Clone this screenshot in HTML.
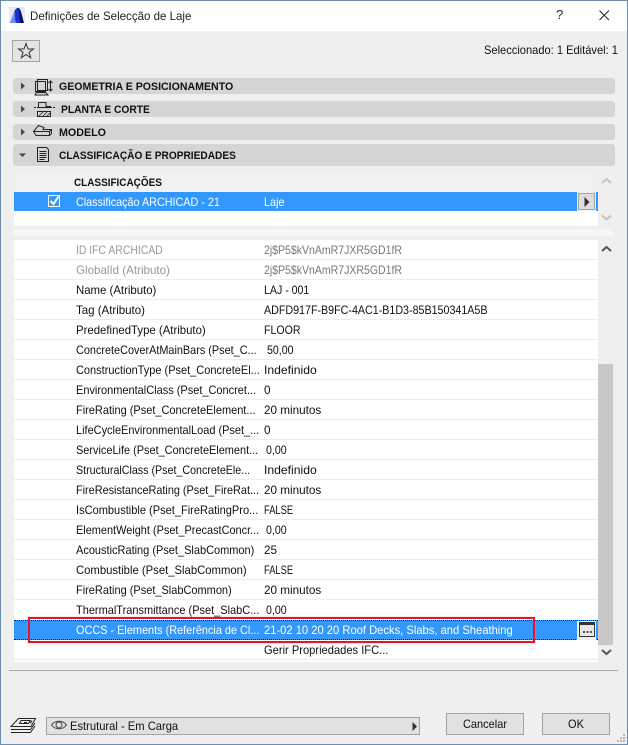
<!DOCTYPE html>
<html><head><meta charset="utf-8"><style>
html,body{margin:0;padding:0}
body{width:628px;height:745px;overflow:hidden;position:relative;background:#efefef;font-family:"Liberation Sans",sans-serif;font-size:11.7px;color:#101010}
div,span{position:absolute}
.t{white-space:nowrap;line-height:18px;height:18px;margin-top:1px;transform-origin:0 50%}
.b{font-weight:bold;font-size:11.4px;color:#111}
.bar{left:13px;width:602px;background:#d5d5d5;border-radius:3px}
.ln{left:14px;width:584px;height:1px;background:#ececec}
.g{color:#999}
.w{color:#fff}
.i{transform:scaleX(1.04)}
.n{transform:scaleX(.906)}
.f{transform:scaleX(.8)}
svg{position:absolute;overflow:visible}
</style></head><body>
<div style="left:0;top:0;width:628px;height:31px;background:#fff"></div>
<div style="left:0;top:0;width:628px;height:1px;background:#6d8dad"></div>
<div style="left:0;top:0;width:1px;height:745px;background:#6d8dad"></div>
<div style="left:627px;top:0;width:1px;height:745px;background:#6d8dad"></div>
<div style="left:0;top:744px;width:628px;height:1px;background:#6d8dad"></div>

<svg style="left:9px;top:7px" width="17" height="17"><rect width="16" height="16" fill="#e8e8f4"/><path d="M1 16 C4 10 5 1 9 1 C12 1 13 10 15 16Z" fill="#1c2fd0"/><path d="M9 1 C12 1 13 10 15 16H11 C11 9 10 4 9 1Z" fill="#0a1250"/><path d="M1 16 C3 11 4 7 6 4 C6 9 6 13 7 16Z" fill="#6d8cf0"/></svg>
<div class="t" style="left:30px;top:6px;font-size:12px;color:#222;transform:scaleX(.96)">Definições de Selecção de Laje</div>
<div class="t" style="left:556px;top:5px;font-size:13px;color:#222">?</div>
<svg style="left:599px;top:10px" width="11" height="11"><path d="M.5 .5L10 10M10 .5L.5 10" stroke="#222" stroke-width="1" fill="none"/></svg>

<div style="left:12px;top:40px;width:26px;height:20px;border:1px solid #a5a5a5;background:#e4e4e4"></div>
<svg style="left:17px;top:42px" width="18" height="17"><path d="M9 1.5L11 7H16.5L12 10.3L13.7 15.8L9 12.5L4.300 15.8L6 10.300L1.500 7H7Z" fill="none" stroke="#333" stroke-width="1"/></svg>
<div class="t" style="left:484px;top:41px;transform:scaleX(.95)">Seleccionado: 1 Editável: 1</div>

<div class="bar" style="top:78px;height:16px"></div>
<div class="bar" style="top:101px;height:16px"></div>
<div class="bar" style="top:124px;height:16px"></div>
<div class="bar" style="top:144px;height:22px"></div>
<svg style="left:0;top:0" width="70" height="170">
<path d="M21 82.500l4 3.500l-4 3.500zM21 105.500l4 3.500l-4 3.500zM21 128.500l4 3.500l-4 3.500z" fill="#444"/>
<path d="M19 153.500h7l-3.500 3.500z" fill="#444"/>
<g fill="none" stroke="#222" stroke-width="1">
<path d="M37.500 79.500h10v11h-10zM35.500 81.500h10v10h-10z"/><path d="M36.500 92.500h9l2.500 2.500h-13z"/><path d="M50.500 81v10M48.500 83l2-2l2 2M48.500 89l2 2l2-2"/>
<path d="M38.500 102.500h7.500v4h5M38.500 102.500v5M34 107.500h2M37 107.500h15M53 107.500h2"/><path d="M37.500 111.500h13v5h-13z"/><path d="M39 116l4-4M43 116l4-4M47 116l3-3" stroke-width=".8"/>
<path d="M33.500 131.500L38.500 125.500L44 127.500L43 129.500H51.500V133.500L49.500 135.500H36ZM33.500 131.500H49.500L51.500 129.500M49.500 131.500V135.500"/>
<path d="M37.500 147.500h9l2 2v12h-11zM39.500 151.500h7M39.500 153.500h7M39.500 155.500h7M39.500 157.500h7M39.500 159.500h5"/>
</g></svg>
<div class="t b" style="left:59px;top:77px;transform:scaleX(.93)">GEOMETRIA E POSICIONAMENTO</div>
<div class="t b" style="left:61px;top:100px;transform:scaleX(.9)">PLANTA E CORTE</div>
<div class="t b" style="left:59px;top:123px;transform:scaleX(.94)">MODELO</div>
<div class="t b" style="left:59px;top:146px;transform:scaleX(.89)">CLASSIFICAÇÃO E PROPRIEDADES</div>

<div style="left:14px;top:172px;width:584px;height:20px;background:#f1f1f1"></div>
<div class="t b" style="left:74px;top:173px;font-size:10.9px;transform:scaleX(.913)">CLASSIFICAÇÕES</div>
<div style="left:14px;top:192px;width:584px;height:19px;background:#3398fe"></div>
<div style="left:14px;top:211px;width:584px;height:15px;background:#fff"></div>
<div style="left:577px;top:192px;width:19px;height:19px;background:#efefef"></div>
<div style="left:578px;top:193px;width:15px;height:15px;background:#dcdcdc;border:1px solid #a8a8a8"></div>
<svg style="left:584px;top:197px" width="8" height="10"><path d="M0.500 0v10l5-5z" fill="#333"/></svg>
<div style="left:48px;top:195px;width:10px;height:10px;border:1px solid #fff;background:#3398fe"></div>
<svg style="left:49px;top:195px" width="12" height="12"><path d="M1.500 6l3 3l5-7.500" fill="none" stroke="#fff" stroke-width="2"/></svg>
<div class="t w" style="left:76px;top:193px;transform:scaleX(.923)">Classificação ARCHICAD - 21</div>
<div class="t w" style="left:264px;top:193px;transform:scaleX(.93)">Laje</div>
<svg style="left:601px;top:177px" width="11" height="52"><path d="M1 6l4.500-4l4.500 4" fill="none" stroke="#c4c4c4" stroke-width="2"/><path d="M1 38.500l4.500 4l4.500-4" fill="none" stroke="#c4c4c4" stroke-width="2"/></svg>

<div style="left:14px;top:229px;width:600px;height:7px;background:#f6f6f6"></div>

<div style="left:14px;top:240px;width:584px;height:422px;background:#fff"></div>
<div style="left:598px;top:364px;width:15px;height:281px;background:#c8c8c8"></div>
<svg style="left:601px;top:245px" width="11" height="414"><path d="M1 6l4.500-4l4.500 4" fill="none" stroke="#555" stroke-width="2"/><path d="M1 405l4.500 4l4.500-4" fill="none" stroke="#555" stroke-width="2"/></svg>

<div class="ln" style="top:259px"></div><div class="ln" style="top:279px"></div><div class="ln" style="top:299px"></div><div class="ln" style="top:319px"></div><div class="ln" style="top:339px"></div><div class="ln" style="top:359px"></div><div class="ln" style="top:379px"></div><div class="ln" style="top:399px"></div><div class="ln" style="top:419px"></div><div class="ln" style="top:439px"></div><div class="ln" style="top:459px"></div><div class="ln" style="top:479px"></div><div class="ln" style="top:499px"></div><div class="ln" style="top:519px"></div><div class="ln" style="top:539px"></div><div class="ln" style="top:559px"></div><div class="ln" style="top:579px"></div><div class="ln" style="top:599px"></div><div class="ln" style="top:659px"></div>

<div class="t g" style="left:76px;top:241px;transform:scaleX(.89)">ID IFC ARCHICAD</div><div class="t g" style="left:264px;top:241px;color:#777;transform:scaleX(.9)">2j$P5$kVnAmR7JXR5GD1fR</div>
<div class="t g" style="left:76px;top:261px;transform:scaleX(.99)">GlobalId (Atributo)</div><div class="t g" style="left:264px;top:261px;color:#777;transform:scaleX(.9)">2j$P5$kVnAmR7JXR5GD1fR</div>
<div class="t" style="left:76px;top:281px;transform:scaleX(.974)">Name (Atributo)</div><div class="t n" style="left:264px;top:281px">LAJ - 001</div>
<div class="t" style="left:76px;top:301px;transform:scaleX(.983)">Tag (Atributo)</div><div class="t" style="left:264px;top:301px;transform:scaleX(.915)">ADFD917F-B9FC-4AC1-B1D3-85B150341A5B</div>
<div class="t" style="left:76px;top:321px;transform:scaleX(.974)">PredefinedType (Atributo)</div><div class="t n" style="left:264px;top:321px">FLOOR</div>
<div class="t" style="left:76px;top:341px;transform:scaleX(.93)">ConcreteCoverAtMainBars (Pset_C...</div><div class="t n" style="left:267px;top:341px">50,00</div>
<div class="t" style="left:76px;top:361px;transform:scaleX(.94)">ConstructionType (Pset_ConcreteEl...</div><div class="t i" style="left:264px;top:361px">Indefinido</div>
<div class="t" style="left:76px;top:381px;transform:scaleX(.94)">EnvironmentalClass (Pset_Concret...</div><div class="t" style="left:264px;top:381px">0</div>
<div class="t" style="left:76px;top:401px;transform:scaleX(.94)">FireRating (Pset_ConcreteElement...</div><div class="t" style="left:264px;top:401px">20 minutos</div>
<div class="t" style="left:76px;top:421px;transform:scaleX(.937)">LifeCycleEnvironmentalLoad (Pset_...</div><div class="t" style="left:264px;top:421px">0</div>
<div class="t" style="left:76px;top:441px;transform:scaleX(.935)">ServiceLife (Pset_ConcreteElement...</div><div class="t n" style="left:266px;top:441px">0,00</div>
<div class="t" style="left:76px;top:461px;transform:scaleX(.915)">StructuralClass (Pset_ConcreteEle...</div><div class="t i" style="left:264px;top:461px">Indefinido</div>
<div class="t" style="left:76px;top:481px;transform:scaleX(.93)">FireResistanceRating (Pset_FireRat...</div><div class="t" style="left:264px;top:481px">20 minutos</div>
<div class="t" style="left:76px;top:501px;transform:scaleX(.945)">IsCombustible (Pset_FireRatingPro...</div><div class="t f" style="left:264px;top:501px">FALSE</div>
<div class="t" style="left:76px;top:521px;transform:scaleX(.935)">ElementWeight (Pset_PrecastConcr...</div><div class="t n" style="left:266px;top:521px">0,00</div>
<div class="t" style="left:76px;top:541px;transform:scaleX(.94)">AcousticRating (Pset_SlabCommon)</div><div class="t" style="left:264px;top:541px">25</div>
<div class="t" style="left:76px;top:561px;transform:scaleX(.966)">Combustible (Pset_SlabCommon)</div><div class="t f" style="left:264px;top:561px">FALSE</div>
<div class="t" style="left:76px;top:581px;transform:scaleX(.94)">FireRating (Pset_SlabCommon)</div><div class="t" style="left:264px;top:581px">20 minutos</div>
<div class="t" style="left:76px;top:601px;transform:scaleX(.94)">ThermalTransmittance (Pset_SlabC...</div><div class="t n" style="left:266px;top:601px">0,00</div>

<div style="left:14px;top:620px;width:584px;height:18px;background:#3398fe;border-top:1px dotted #14345c;border-bottom:1px dotted #0a1a30"></div>
<div class="t w" style="left:76px;top:621px;transform:scaleX(.932)">OCCS - Elements (Referência de Cl...</div>
<div class="t w" style="left:264px;top:621px;transform:scaleX(.957)">21-02 10 20 20 Roof Decks, Slabs, and Sheathing</div>
<div style="left:577px;top:621px;width:19px;height:19px;background:#efefef"></div>
<svg style="left:579px;top:622px" width="17" height="16"><rect x=".5" y=".5" width="15" height="14" fill="#e8e8e8" stroke="#333"/><rect x=".5" y=".5" width="15" height="2.500" fill="#333"/><path d="M4 10h2M7.500 10h2M11 10h2" stroke="#222" stroke-width="1.500"/></svg>
<div class="t" style="left:264px;top:641px;transform:scaleX(.953)">Gerir Propriedades IFC...</div>
<div style="left:28px;top:617px;width:503px;height:22px;border:2px solid #e8141e;box-shadow:0 0 1px #f08a8a"></div>

<div style="left:9px;top:670px;width:609px;height:1px;background:#a9a9a9"></div>

<svg style="left:10px;top:718px" width="28" height="17"><g fill="none" stroke="#222" stroke-width="1"><path d="M8.500 .5h17l-4.500 8h-20z"/><path d="M11 2.500h9l-1.500 3h-9zM14 4.500h3M20.500 2.500l-2 3M22 2.500l-1.500 3"/><path d="M1 11.500h19.500l4.500-6.500M1 14.500h19.500l4.500-6.500"/></g></svg>
<div style="left:46px;top:717px;width:372px;height:16px;border:1px solid #a4a4a4;background:#e1e1e1"></div>
<svg style="left:51px;top:719px" width="16" height="12"><path d="M.5 6C4 1 12 1 15.500 6C12 11 4 11 .5 6Z" fill="none" stroke="#444"/><circle cx="8" cy="6" r="3" fill="none" stroke="#444"/></svg>
<div class="t" style="left:70px;top:717px;transform:scaleX(.957)">Estrutural - Em Carga</div>
<svg style="left:412px;top:722px" width="6" height="10"><path d="M.500 0v9l4.500-4.500z" fill="#333"/></svg>
<div style="left:446px;top:713px;width:76px;height:20px;border:1px solid #a4a4a4;background:#e1e1e1"></div>
<div style="left:542px;top:713px;width:66px;height:20px;border:1px solid #a4a4a4;background:#e1e1e1"></div>
<div class="t" style="left:446px;top:714px;width:78px;text-align:center;line-height:20px;font-size:12px;margin:0;transform-origin:50% 50%;transform:scaleX(.917)">Cancelar</div>
<div class="t" style="left:542px;top:714px;width:68px;text-align:center;line-height:20px;font-size:12px;margin:0;transform-origin:50% 50%;transform:scaleX(.917)">OK</div>
<svg style="left:616px;top:733px" width="10" height="10"><path d="M7 1h2v2h-2zM4 4h2v2h-2zM7 4h2v2h-2zM1 7h2v2h-2zM4 7h2v2h-2zM7 7h2v2h-2z" fill="#b8b8b8"/></svg>
</body></html>
